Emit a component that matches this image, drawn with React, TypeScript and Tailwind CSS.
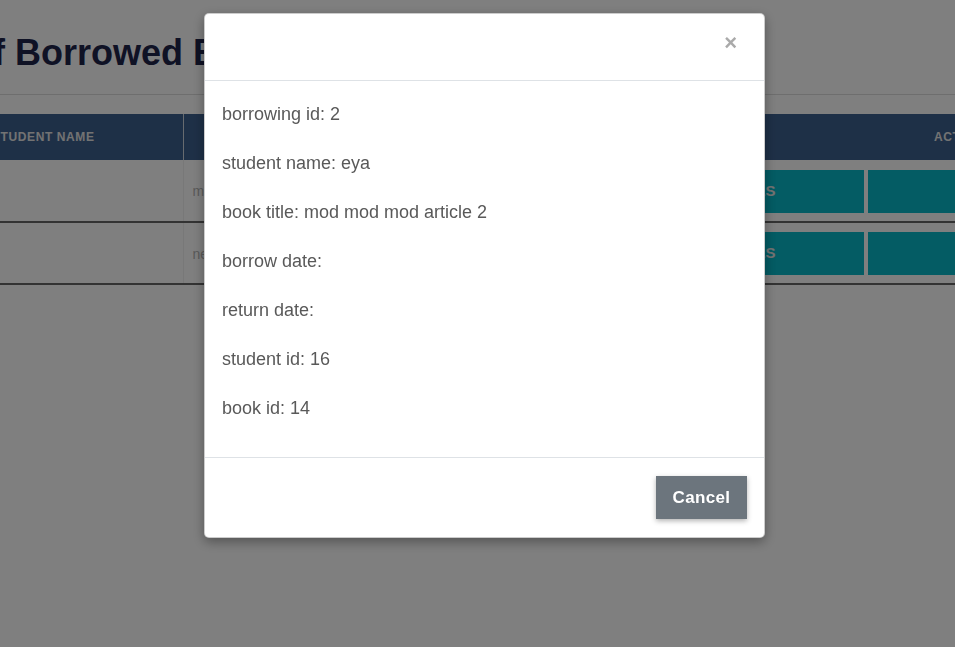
const details = [
  "borrowing id: 2",
  "student name: eya",
  "book title: mod mod mod article 2",
  "borrow date:",
  "return date:",
  "student id: 16",
  "book id: 14",
];

const rows = [
  { id: 1, title: "math" },
  { id: 2, title: "new book" },
];

function BorrowedList() {
  return (
    <div className="relative h-[647px] w-[955px] overflow-hidden bg-white font-['Liberation_Sans',Arial,sans-serif]">
      <div className="ml-[-103px] w-[1400px]">
        <h1 className="pt-[31px] text-[36px] font-bold leading-[44px] text-[#1e244a]">
          List of Borrowed Books
        </h1>
        <div className="mt-[19px] h-px bg-[#ddd]" />
        <table className="ml-[83px] mt-[19px] table-fixed border-collapse">
          <thead>
            <tr className="h-[46px] bg-[#3d618f] text-left text-[12px] font-bold uppercase tracking-[0.05em] text-[#e6e6e6]">
              <th className="w-[203px] border-r border-[#cfd6df] pl-[12px]">Student name</th>
              <th className="w-[441px] pl-[60px]"></th>
              <th className="w-[600px] pl-[310px]">Actions</th>
            </tr>
          </thead>
          <tbody>
            {rows.map((r) => (
              <tr key={r.id} className="h-[62px] border-b-2 border-[#666] text-[14px] text-[#b4b4b4]">
                <td className="border-r border-[#f0f0f0] pl-[12px]"></td>
                <td className="pl-[9px] pt-[2px]">{r.title}</td>
                <td>
                  <div className="flex gap-[4px] pt-[1px]">
                    <button className="h-[43px] w-[240px] bg-[#08b8c8] text-[15px] font-bold uppercase text-[#e6e6e6]">
                      Details
                    </button>
                    <button className="h-[43px] w-[240px] bg-[#08b8c8] text-[15px] font-bold uppercase text-[#e6e6e6]">
                      Edit
                    </button>
                  </div>
                </td>
              </tr>
            ))}
          </tbody>
        </table>
      </div>
    </div>
  );
}

function DetailsModal() {
  return (
    <div className="fixed inset-0 bg-black/50 font-['Liberation_Sans',Arial,sans-serif]">
      <div className="ml-[204px] mt-[13px] w-[561px] rounded-[5px] border border-black/20 bg-white shadow-[0_4px_12px_rgba(0,0,0,0.35)]">
        <div className="flex h-[67px] items-center justify-end border-b border-[#dee2e6] pb-[8px] pr-[27px]">
          <button className="text-[22px] font-bold leading-none text-[#aaa]">×</button>
        </div>
        <div className="px-[17px] pt-[20px] pb-[13px]">
          {details.map((d) => (
            <p key={d} className="mb-[22px] text-[18px] leading-[27px] text-[#595959]">
              {d}
            </p>
          ))}
        </div>
        <div className="flex h-[80px] items-start justify-end border-t border-[#dee2e6] pr-[17px] pt-[18px]">
          <button className="h-[43px] w-[91px] bg-[#6c757d] text-[17px] font-bold tracking-[0.02em] text-white shadow-[0_2px_5px_rgba(0,0,0,0.3)]">
            Cancel
          </button>
        </div>
      </div>
    </div>
  );
}

export default function App() {
  return (
    <div className="relative">
      <BorrowedList />
      <DetailsModal />
    </div>
  );
}
